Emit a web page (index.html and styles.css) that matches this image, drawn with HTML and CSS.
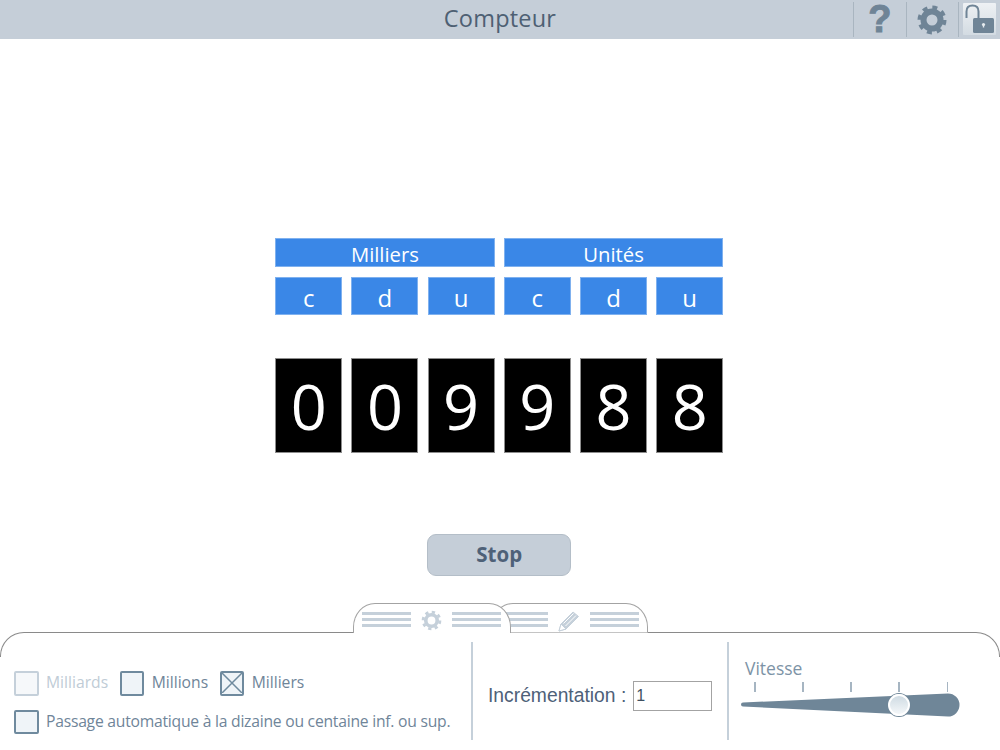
FILE: index.html
```html
<!DOCTYPE html>
<html lang="fr">
<head>
<meta charset="utf-8">
<title>Compteur</title>
<link rel="stylesheet" href="styles.css">
</head>
<body>
<header class="topbar">
  <h1 class="title">Compteur</h1>
  <div class="tools">
    <div class="tool"><span class="help">?</span></div>
    <div class="tool">
      <svg viewBox="0 0 32 32" width="32" height="32"><circle cx="16" cy="16" r="8.500" fill="none" stroke="#6f8496" stroke-width="6"/><circle cx="16" cy="16" r="12" fill="none" stroke="#6f8496" stroke-width="5" stroke-dasharray="4.700 4.720"/></svg>
    </div>
    <div class="tool tool-lock">
      <svg viewBox="0 0 33 32" width="33" height="32"><defs><linearGradient id="lockbg" x1="0" y1="0" x2="0" y2="1"><stop offset="0" stop-color="#eef1f4"/><stop offset="1" stop-color="#d3dbe2"/></linearGradient></defs><rect width="33" height="32" rx="1" fill="url(#lockbg)"/><path d="M3.500 15V8.500C3.500 4.500 6 2.500 9.500 2.500S15.500 4.500 15.500 8.500V15" fill="none" stroke="#6f8496" stroke-width="2"/><rect x="10" y="15" width="21" height="15" rx="1.500" fill="#6f8496"/><circle cx="20.500" cy="21.500" r="1.600" fill="#e6ebef"/><rect x="19.800" y="21.500" width="1.400" height="3" fill="#e6ebef"/></svg>
    </div>
  </div>
</header>

<main class="stage">
  <section class="counter">
    <div class="group">Milliers</div>
    <div class="group">Unités</div>
    <div class="place">c</div><div class="place">d</div><div class="place">u</div>
    <div class="place">c</div><div class="place">d</div><div class="place">u</div>
    <div class="digit">0</div><div class="digit">0</div><div class="digit">9</div>
    <div class="digit">9</div><div class="digit">8</div><div class="digit">8</div>
  </section>
  <button class="stop" type="button">Stop</button>
</main>

<footer class="dock">
  <div class="tabs">
    <div class="tab tab-active">
      <span class="lines"></span>
      <svg viewBox="0 0 22 22" width="21" height="21"><circle cx="11" cy="11" r="6" fill="none" stroke="#c5d0da" stroke-width="3.800"/><circle cx="11" cy="11" r="8.800" fill="none" stroke="#c5d0da" stroke-width="3" stroke-dasharray="3.400 3.510"/></svg>
      <span class="lines"></span>
    </div>
    <div class="tab tab-back">
      <span class="lines"></span>
      <svg viewBox="0 0 22 22" width="22" height="22"><path d="M1 21l2-7L15 2l5.500 4.500L8 19z" fill="#c5d0da" stroke="#c5d0da"/><path d="M1 21l2-7 5 5z" fill="#fff" stroke="#c5d0da"/><path d="M5.500 13.500L15.500 3.500M7.500 16L18 5.500" stroke="#fff"/></svg>
      <span class="lines"></span>
    </div>
  </div>
  <div class="panel">
    <div class="opts">
      <div class="opt-row">
        <label class="opt opt-off"><span class="box"></span>Milliards</label>
        <label class="opt"><span class="box"></span>Millions</label>
        <label class="opt"><span class="box box-x"><svg viewBox="0 0 20 20" width="20" height="20"><path d="M0 0L20 20M20 0L0 20" stroke="#6f8a9e" stroke-width="1.500"/></svg></span>Milliers</label>
      </div>
      <div class="opt-row">
        <label class="opt opt-long"><span class="box"></span>Passage automatique à la dizaine ou centaine inf. ou sup.</label>
      </div>
    </div>
    <div class="incr">
      <span class="incr-label">Incrémentation :</span>
      <input class="incr-input" type="text" value="1">
    </div>
    <div class="speed">
      <div class="speed-label">Vitesse</div>
      <div class="ticks"><i></i><i></i><i></i><i></i><i></i></div>
      <div class="slider">
        <svg viewBox="0 0 220 26" width="220" height="26"><path d="M3 10.500L208 1.500a11.500 11.500 0 0 1 0 23L3 14.500a2 2 0 0 1 0-4z" fill="#6f8698"/></svg>
        <span class="knob"></span>
      </div>
    </div>
  </div>
</footer>
</body>
</html>
```
FILE: styles.css
```css
* { box-sizing: border-box; }
html, body { margin: 0; height: 100%; }
body {
  width: 1000px; height: 750px; overflow: hidden;
  display: flex; flex-direction: column;
  background: #fff;
  font-family: "Open Sans", "Noto Sans", sans-serif;
}
.topbar {
  height: 39px; flex: none; background: #c5ced8;
  display: flex; align-items: center; justify-content: center;
  position: relative;
}
.title { margin: 0 0 3px; font-size: 23.500px; font-weight: 400; color: #4e6073; letter-spacing: .2px; }
.tools { position: absolute; right: 0; top: 2px; height: 35px; display: flex; }
.tool {
  width: 52.500px; height: 35px; border-left: 1px solid #a9b5c0;
  display: flex; align-items: center; justify-content: center;
}
.tool-lock { width: 42px; justify-content: flex-start; align-items: flex-start; padding: 1px 0 0 4px; }
.help {
  font-family: "Liberation Sans", sans-serif; font-weight: 700; font-size: 38px; line-height: 35px;
  color: #6f8496; -webkit-text-stroke: 1px #6f8496;
}

.stage { flex: 1; display: flex; flex-direction: column; align-items: center; padding: 199px 1.500px 0 0; }
.counter {
  width: 448px;
  display: grid;
  grid-template-columns: repeat(6, 67px);
  column-gap: 9.200px;
  grid-template-rows: 29px 38px 128px;
  row-gap: 10px;
}
.group, .place {
  background: #3a87e7; color: #fff; border: 1px solid #7fb1ef;
  display: flex; align-items: center; justify-content: center;
}
.group { grid-column: span 3; font-size: 20.300px; padding-top: 3px; }
.place { font-size: 24px; padding-top: 3px; }
.digit {
  background: #000; color: #fff; font-size: 63px; border: 1px solid #8d8d8d;
  display: flex; align-items: center; justify-content: center;
  margin-top: 33px; height: 95px;
}
.stop {
  margin-top: 81px; width: 144px; height: 42px;
  background: #c5ced8; border: 1px solid #b4bec8; border-radius: 9px;
  font-family: inherit; font-size: 20.500px; font-weight: 700; color: #4e6178;
  padding: 0 0 2px;
}

.dock { flex: none; height: 147px; position: relative; }
.tabs { position: absolute; left: 353px; top: 0; height: 30px; display: flex; z-index: 1; }
.tab {
  width: 157.500px; height: 30px;
  border: 1px solid #a3a3a3; border-bottom: 0;
  border-radius: 22px 22px 0 0 / 24px 24px 0 0;
  background: #fff;
  display: flex; align-items: flex-start; justify-content: center; gap: 10px;
  padding-top: 6px;
}
.tab-active { position: relative; z-index: 2; }
.tab-back { margin-left: -20px; height: 30px; border-bottom: 1px solid #c4c4c4; }
.lines {
  width: 49px; height: 15px;
  margin-top: 2px; flex: none;
  border-top: 3px solid #c5d0da; border-bottom: 3px solid #c5d0da;
  position: relative;
}
.lines::after {
  content: ""; position: absolute; left: 0; right: 0; top: 3px; height: 3px; background: #c5d0da;
}
.panel {
  position: absolute; left: 0; right: 0; top: 29px; bottom: 0;
  display: flex;
}
.panel::before {
  content: ""; position: absolute; left: 0; right: 0; top: 0; height: 24px;
  border: 1.500px solid #8a8a8a; border-bottom: 0;
  border-radius: 24px 24px 0 0;
  pointer-events: none;
}
.opts {
  width: 473px; height: 98px; margin-top: 10px; padding: 29px 0 0 14px;
  border-right: 2px solid #c5d0da;
  display: flex; flex-direction: column; gap: 14px;
}
.opt-row { display: flex; gap: 11.500px; }
.opt { display: flex; align-items: center; gap: 7.500px; font-size: 15.700px; color: #6f8599; height: 24.500px; white-space: nowrap; padding-bottom: 2px; }
.opt-long { letter-spacing: -.24px; }
.opt-off { color: #c0ccd6; }
.box {
  width: 24.500px; height: 24.500px; flex: none; margin-top: 2px;
  background: #eff4f8; border: 2px solid #6f8a9e; border-radius: 2px;
  display: block;
}
.box svg { display: block; }
.opt-off .box { background: #f6f8fa; border-color: #c5d0da; }
.incr {
  width: 255.500px; height: 98px; margin-top: 10px;
  border-right: 2px solid #c5d0da;
  display: flex; align-items: center; padding: 9px 0 0 15px; gap: 7px;
}
.incr-label { font-family: "Liberation Sans", sans-serif; font-size: 19.300px; color: #4e6178; }
.incr-input {
  width: 79px; height: 30px; border: 1px solid #a3a3a3; padding: 0 2px;
  font-family: "Liberation Sans", sans-serif; font-size: 16px; color: #3f4f60; background: #fff;
}
.speed { flex: 1; padding: 25px 0 0 11.500px; }
.speed-label { font-size: 17.500px; color: #7d93a6; line-height: 22px; margin-left: 5px; }
.ticks { display: flex; margin: 3px 0 0 14px; width: 194px; justify-content: space-between; }
.ticks i { width: 1.500px; height: 10px; background: #a6b5c2; display: block; }
.slider { position: relative; height: 26px; margin-top: 0; }
.slider svg { display: block; }
.knob {
  position: absolute; left: 148px; top: 2px; width: 22px; height: 22px; border-radius: 50%;
  background: linear-gradient(#cfdbe3, #f4f7f9); border: 2px solid #fff; box-shadow: 0 0 0 1px #6f8698;
}
```
